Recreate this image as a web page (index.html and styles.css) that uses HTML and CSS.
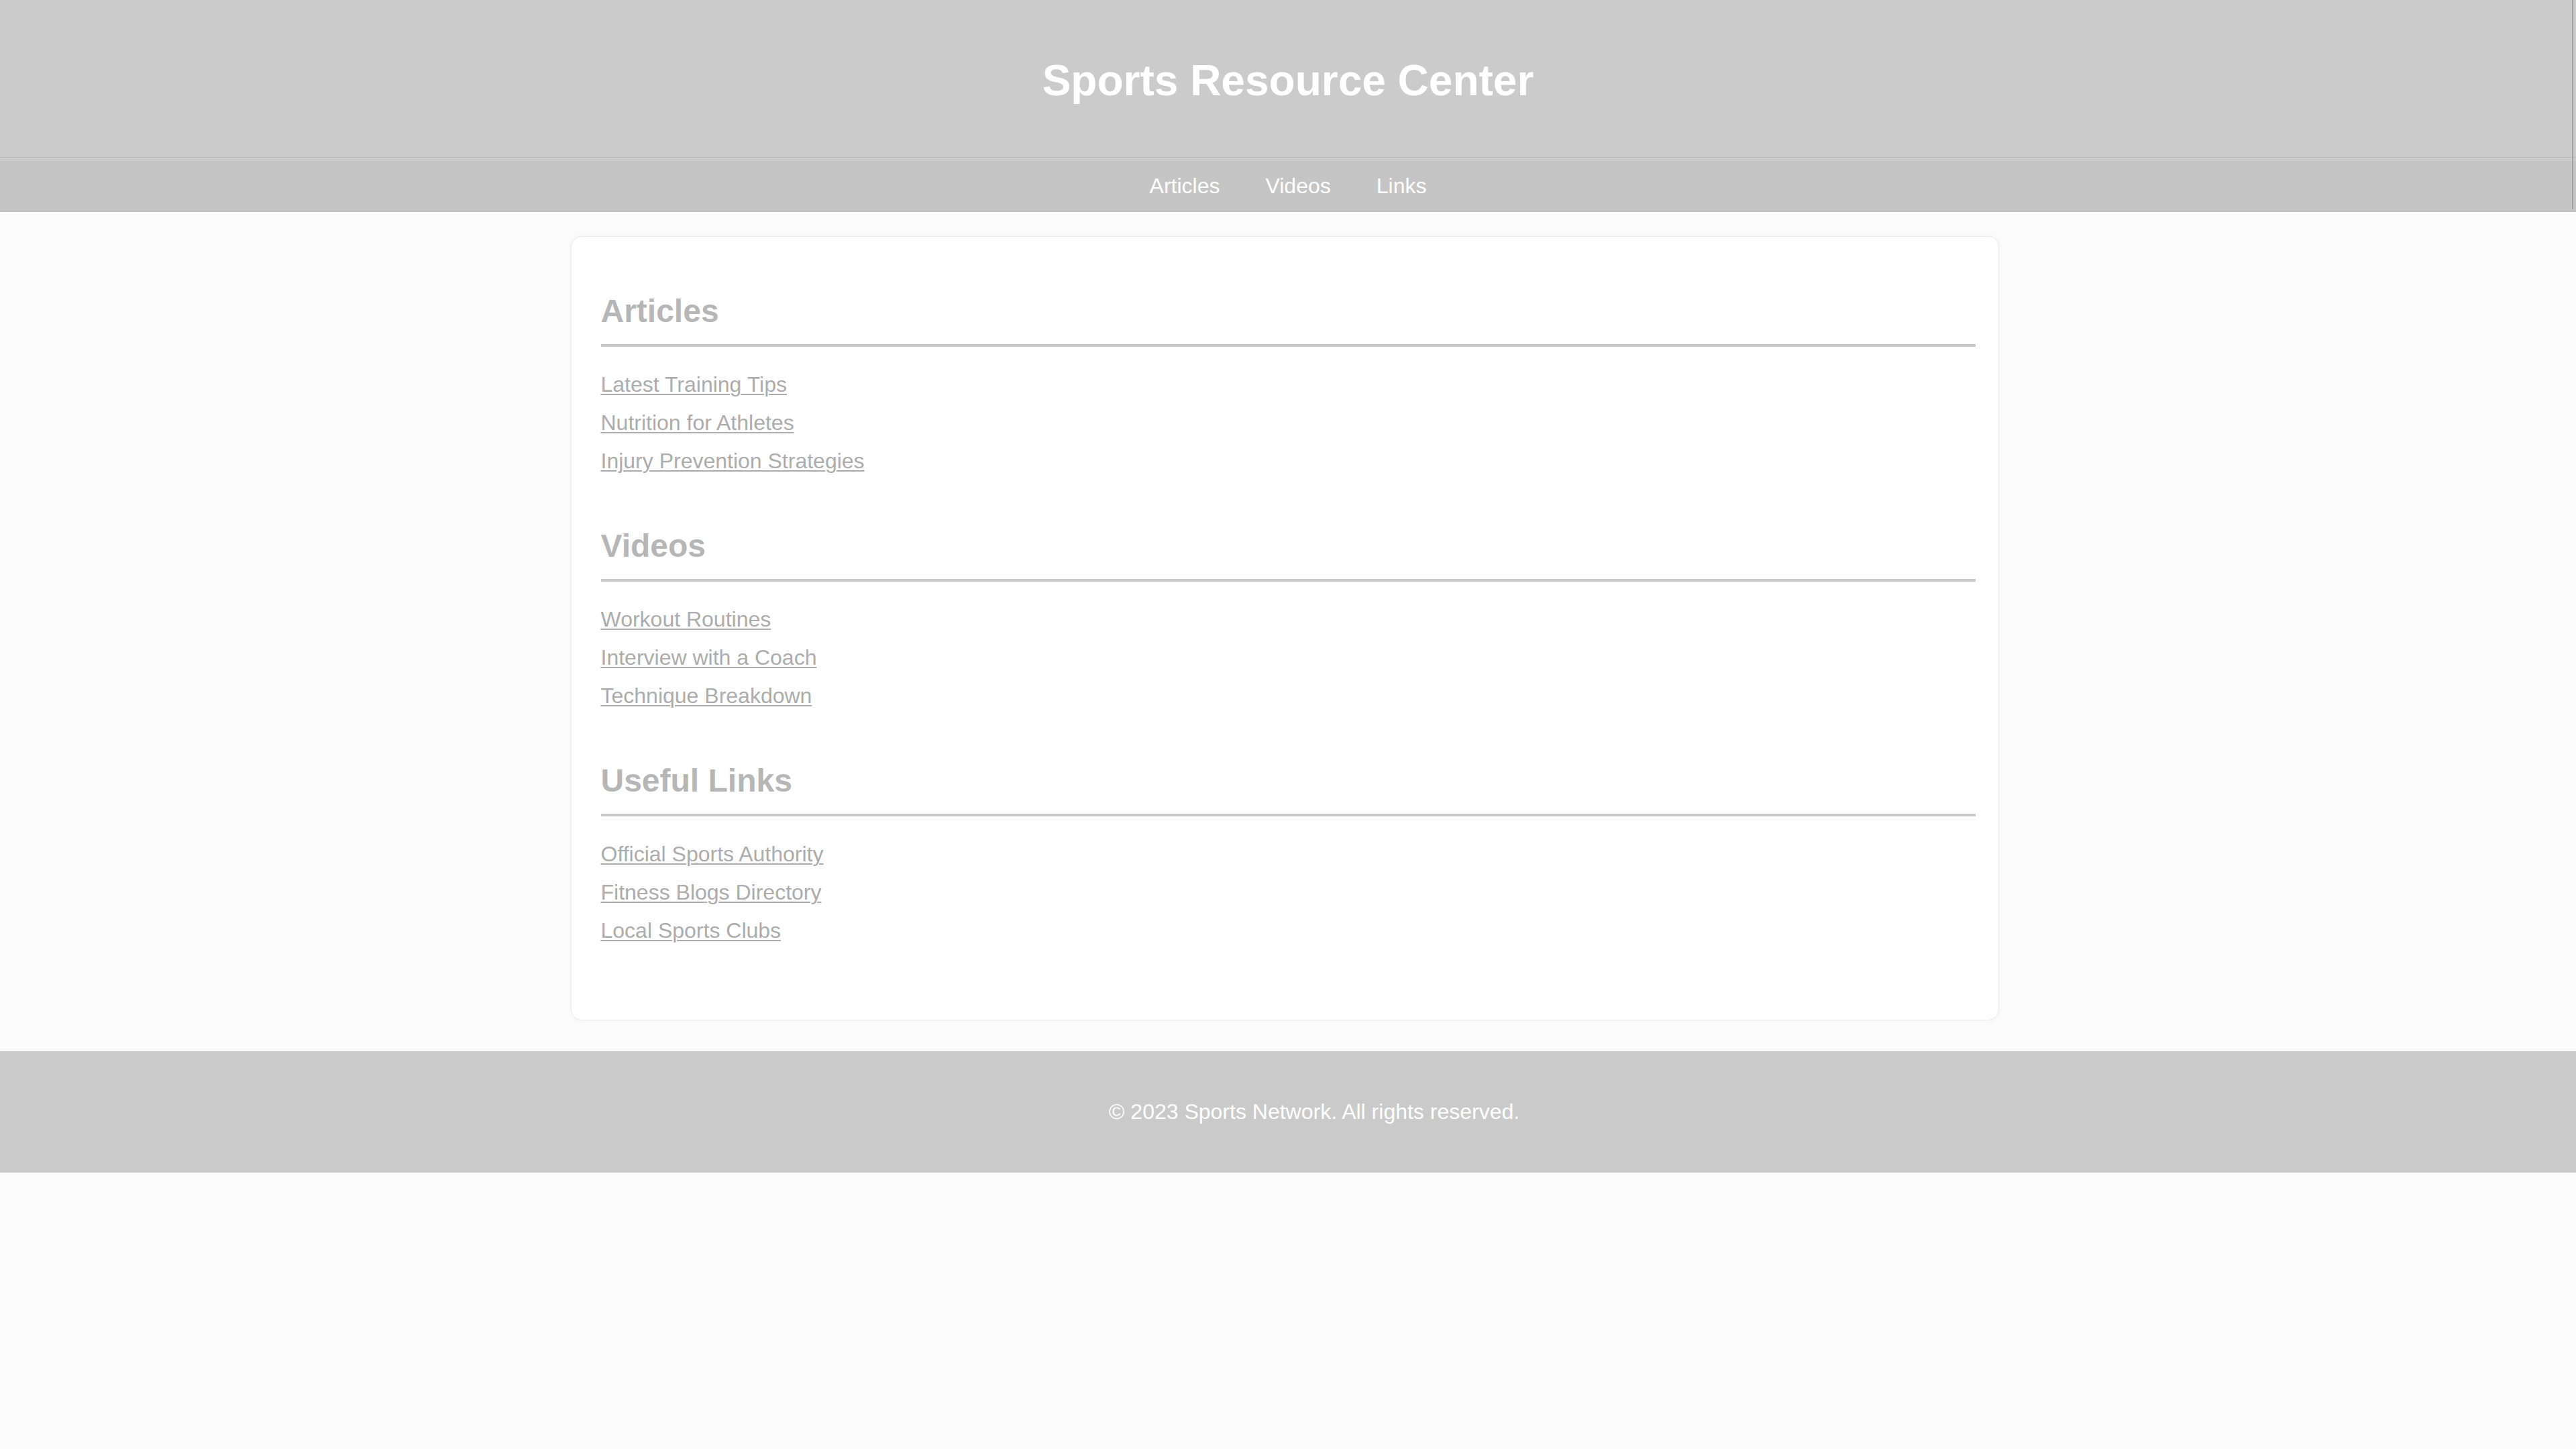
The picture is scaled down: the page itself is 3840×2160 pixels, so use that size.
FILE: index.html
```html
<!DOCTYPE html>
<html lang="en">
<head>
<meta charset="utf-8">
<title>Sports Resource Center</title>
<link rel="stylesheet" href="styles.css">
</head>
<body>
<div class="top">
  <header class="site-header">
    <h1 class="site-title">Sports Resource Center</h1>
  </header>
  <nav class="site-nav">
    <a href="#articles">Articles</a>
    <a href="#videos">Videos</a>
    <a href="#links">Links</a>
  </nav>
  <div class="edge-line"></div>
</div>
<main class="main">
  <div class="card">
    <section class="section" id="articles">
      <h2 class="section-title">Articles</h2>
      <ul class="link-list">
        <li><a href="#">Latest Training Tips</a></li>
        <li><a href="#">Nutrition for Athletes</a></li>
        <li><a href="#">Injury Prevention Strategies</a></li>
      </ul>
    </section>
    <section class="section" id="videos">
      <h2 class="section-title">Videos</h2>
      <ul class="link-list">
        <li><a href="#">Workout Routines</a></li>
        <li><a href="#">Interview with a Coach</a></li>
        <li><a href="#">Technique Breakdown</a></li>
      </ul>
    </section>
    <section class="section" id="links">
      <h2 class="section-title">Useful Links</h2>
      <ul class="link-list">
        <li><a href="#">Official Sports Authority</a></li>
        <li><a href="#">Fitness Blogs Directory</a></li>
        <li><a href="#">Local Sports Clubs</a></li>
      </ul>
    </section>
  </div>
</main>
<footer class="site-footer">
  <p class="footer-text">© 2023 Sports Network. All rights reserved.</p>
</footer>
</body>
</html>
```
FILE: styles.css
```css
html, body {
  margin: 0;
  padding: 0;
}
body {
  background: #fbfbfb;
  font-family: "Liberation Sans", Arial, sans-serif;
  font-size: 32px;
}
.top {
  position: relative;
}
.site-header {
  background: #cbcbcb;
  padding: 83px 0 77px;
  border-bottom: 1px solid #b6b6b6;
  text-align: center;
}
.site-title {
  margin: 0;
  font-size: 64px;
  line-height: 74px;
  font-weight: bold;
  color: #ffffff;
}
.site-nav {
  background: linear-gradient(#cbcbcb 0 5px, #c5c5c5 5px);
  height: 81px;
  display: flex;
  justify-content: center;
  align-items: center;
  gap: 68px;
  padding-top: 4px;
  box-sizing: border-box;
}
.site-nav a {
  color: #ffffff;
  text-decoration: none;
  font-size: 32px;
  line-height: 37px;
}
.edge-line {
  position: absolute;
  top: 0;
  right: 4px;
  width: 2px;
  height: 312px;
  background: #a3a3a3;
}
.main {
  padding: 36px 10px 46px 0;
  display: flex;
  justify-content: center;
}
.card {
  width: 2129px;
  box-sizing: border-box;
  background: #ffffff;
  border: 1px solid #ebebeb;
  border-radius: 16px;
  box-shadow: 0 0 6px rgba(0, 0, 0, 0.04);
  padding: 83px 34px 114px 44px;
  display: flex;
  flex-direction: column;
  gap: 80px;
}
.section-title {
  margin: 0 0 38px;
  font-size: 48px;
  line-height: 55px;
  font-weight: bold;
  color: #b6b6b6;
  padding-bottom: 22px;
  border-bottom: 4px solid #c8c8c8;
}
.link-list {
  list-style: none;
  margin: 0;
  padding: 0;
  display: flex;
  flex-direction: column;
  gap: 20px;
}
.link-list li {
  line-height: 37px;
}
.link-list a {
  color: #acacac;
  text-decoration: underline;
  text-decoration-thickness: 2px;
  text-underline-offset: 3px;
}
.site-footer {
  background: #cacaca;
  padding: 40px 0;
  text-align: center;
}
.footer-text {
  margin: 32px 0;
  line-height: 37px;
  color: #ffffff;
  padding-left: 78px;
}
```
